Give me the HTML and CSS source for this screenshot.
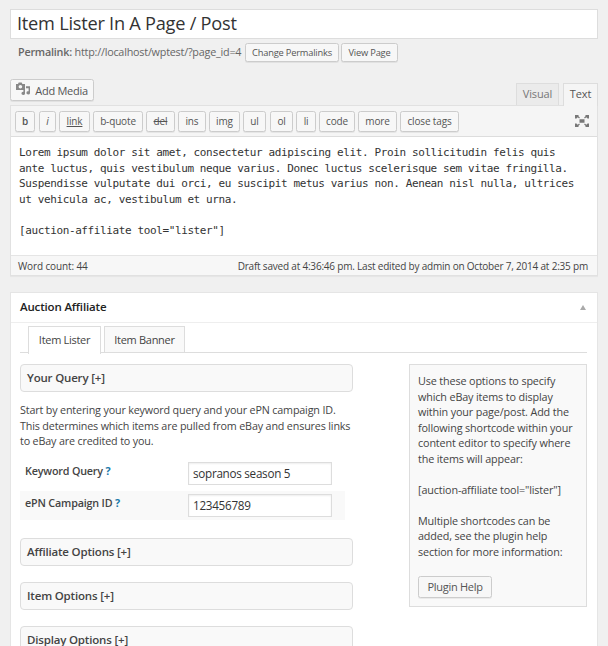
FILE: index.html
```html
<!DOCTYPE html>
<html lang="en">
<head>
<meta charset="utf-8">
<title>Edit Page</title>
<link rel="stylesheet" href="styles.css">
</head>
<body>
<main class="page">
  <div class="title"><span>Item Lister In A Page / Post</span></div>
  <div class="permalink"><span class="address"><b>Permalink:</b> http://localhost/wptest/?page_id=4</span><button class="btn small change">Change Permalinks</button><button class="btn small view">View Page</button></div>
  <div class="tools">
    <button class="btn media"><svg width="14" height="13" viewBox="0 0 14 13"><path fill="#888" fill-rule="evenodd" d="M0 2h2l.7-1.5h3L6.4 2H9v6H0zM4.4 3a1.8 1.8 0 1 0 0 3.6 1.8 1.8 0 0 0 0-3.6z"/><path fill="#888" d="M10 4.3h4v6.4a1.8 1.6 0 1 1-1.4-1.4V6.2H10zM7.4 8H9v3.2a1.8 1.6 0 1 1-1.6-1.5z"/></svg><span>Add Media</span></button>
    <div class="modes"><span class="mode visual">Visual</span><span class="mode text">Text</span></div>
  </div>
  <section class="editor">
    <div class="toolbar">
      <button class="btn q w20"><b>b</b></button><button class="btn q w17"><i>i</i></button><button class="btn q w31"><u>link</u></button><button class="btn q w50">b-quote</button><button class="btn q w29"><s>del</s></button><button class="btn q w28">ins</button><button class="btn q w31">img</button><button class="btn q w23">ul</button><button class="btn q w23 ol">ol</button><button class="btn q w20">li</button><button class="btn q w36">code</button><button class="btn q w39">more</button><button class="btn q w59">close tags</button>
      <svg class="expand" width="14" height="12" viewBox="0 0 14 12"><path fill="#777" d="M4.5 4.2h5v3.6h-5zM0 0h3.5v1.3l1.4 1.3-.8.8L2.7 2.2 1.5 3.4H0zM14 0v3.4h-1.5l-1.2-1.2-1.4 1.2-.8-.8 1.4-1.3V0zM0 12V8.6h1.5l1.2 1.2 1.4-1.2.8.8-1.4 1.3V12zM14 12h-3.5v-1.3L9.1 9.4l.8-.8 1.4 1.2 1.2-1.2H14z"/></svg>
    </div>
    <div class="content">Lorem ipsum dolor sit amet, consectetur adipiscing elit. Proin sollicitudin felis quis<br>ante luctus, quis vestibulum neque varius. Donec luctus scelerisque sem vitae fringilla.<br>Suspendisse vulputate dui orci, eu suscipit metus varius non. Aenean nisl nulla, ultrices<br>ut vehicula ac, vestibulum et urna.<br><br>[auction-affiliate tool="lister"]</div>
    <div class="status"><span class="count">Word count: 44</span><span class="saved">Draft saved at 4:36:46 pm. Last edited by admin on October 7, 2014 at 2:35 pm</span></div>
  </section>
  <section class="box">
    <header class="box-head"><h2>Auction Affiliate</h2><span class="arrow"></span></header>
    <nav class="tabs"><span class="tab active">Item Lister</span><span class="tab banner">Item Banner</span></nav>
    <div class="columns">
      <div class="options">
        <h3 class="group">Your Query [+]</h3>
        <p class="intro">Start by entering your keyword query and your ePN campaign ID.<br>This determines which items are pulled from eBay and ensures links<br>to eBay are credited to you.</p>
        <div class="field"><label>Keyword Query <a>?</a></label><input type="text" value="sopranos season 5"></div>
        <div class="field shaded"><label>ePN Campaign ID <a>?</a></label><input type="text" value="123456789"></div>
        <h3 class="group first">Affiliate Options [+]</h3>
        <h3 class="group">Item Options [+]</h3>
        <h3 class="group last">Display Options [+]</h3>
      </div>
      <aside class="help">
        <p>Use these options to specify<br>which eBay items to display<br>within your page/post. Add the<br>following shortcode within your<br>content editor to specify where<br>the items will appear:</p>
        <p>[auction-affiliate tool="lister"]</p>
        <p>Multiple shortcodes can be<br>added, see the plugin help<br>section for more information:</p>
        <button class="btn plugin">Plugin Help</button>
      </aside>
    </div>
  </section>
</main>
</body>
</html>
```

FILE: styles.css
```css
* { box-sizing: border-box; }
html, body { margin: 0; height: 646px; overflow: hidden; }
body {
  background: #f0f0f0;
  color: #444;
  font: 11px/15.5px "Open Sans", sans-serif;
}
.page { width: 588px; height: 646px; overflow: hidden; margin-left: 10px; padding-top: 9px; white-space: nowrap; }
.title {
  height: 30px;
  padding-left: 6px;
  border: 1px solid #ddd;
  background: #fff;
  color: #333;
  font-size: 18.2px;
  line-height: 26px;
  letter-spacing: -.24px;
}
.btn {
  display: flex;
  align-items: center;
  justify-content: center;
  flex: none;
  margin: 0;
  padding: 0;
  border: 1px solid #ccc;
  border-radius: 2.5px;
  background: #f7f7f7;
  box-shadow: 0 1px 0 rgba(0, 0, 0, .06);
  color: #555;
  font: 11px/15px "Open Sans", sans-serif;
  letter-spacing: -.28px;
  white-space: nowrap;
}
.permalink { display: flex; height: 19px; margin-top: 4px; padding-left: 8px; color: #666; }
.address { width: 227px; line-height: 18px; font-size: 10.8px; letter-spacing: -.22px; }
.permalink b { font-weight: 600; }
.small { height: 19px; font-size: 9.3px; letter-spacing: -.2px; }
.change { width: 94px; }
.view { width: 57px; margin-left: 2px; }
.tools { display: flex; justify-content: space-between; height: 26px; margin-top: 17px; }
.media { width: 84px; height: 22px; gap: 5px; }
.media svg { margin-top: -3px; }
.modes { display: flex; gap: 4px; padding-top: 4px; }
.mode { height: 22px; border: 1px solid #ddd; border-bottom: 0; text-align: center; line-height: 20px; letter-spacing: -.1px; }
.visual { width: 43px; background: #ebebeb; color: #777; }
.text { position: relative; width: 35px; height: 23px; background: #f5f5f5; color: #555; }
.editor { height: 171px; border: 1px solid #e1e1e1; background: #fff; box-shadow: 0 1px 1px rgba(0, 0, 0, .04); }
.toolbar {
  display: flex;
  gap: 3px;
  height: 31px;
  padding: 5px 8px 0 4px;
  border-bottom: 1px solid #ddd;
  background: #f5f5f5;
}
.q { height: 21px; font-size: 10px; letter-spacing: -.15px; }
.q b { font-weight: 600; }
.w17 { width: 17px; margin-left: 1px; }
.w20 { width: 20px; } .w23 { width: 23px; }
.w28 { width: 28px; } .w29 { width: 29px; } .w31 { width: 31px; }
.w36 { width: 36px; } .w39 { width: 39px; } .w50 { width: 50px; } .w59 { width: 59px; }
.ol { margin-left: 1px; }
.expand { margin: 4px 0 0 auto; }
.content {
  height: 118px;
  padding: 8px 8px 0 8px;
  color: #333;
  font: 11px/15.5px "DejaVu Sans Mono", monospace;
  letter-spacing: -.386px;
}
.status {
  display: flex;
  justify-content: space-between;
  height: 20px;
  padding: 0 9px 0 7px;
  border-top: 1px solid #e5e5e5;
  background: #f7f7f7;
  font-size: 10px;
  line-height: 20px;
  letter-spacing: -.2px;
}
.count { letter-spacing: -.12px; }
.box { height: 400px; margin-top: 16px; border: 1px solid #e5e5e5; background: #fff; }
.box-head { display: flex; justify-content: space-between; height: 30px; padding: 0 11px 0 9px; border-bottom: 1px solid #eee; }
h2 { margin: 0; color: #222; font-size: 11.5px; font-weight: 600; line-height: 28px; letter-spacing: -.16px; }
.arrow { width: 0; height: 0; margin-top: 12px; border: 3px solid transparent; border-top: 0; border-bottom: 5px solid #aaa; }
.tabs { display: flex; gap: 3px; height: 27px; margin: 3px 10px 0 9px; padding-left: 8px; border-bottom: 1px solid #ddd; }
.tab { width: 81px; height: 26px; border: 1px solid #ddd; border-bottom: 0; background: #f9f9f9; line-height: 26px; text-align: center; letter-spacing: -.3px; }
.tab.active { width: 73px; height: 28px; background: #fff; }
.columns { display: flex; justify-content: space-between; margin: 11px 10px 0 9px; }
.options { width: 333px; }
.group {
  height: 28px;
  margin: 0 0 16px;
  padding-left: 6px;
  border: 1px solid #ddd;
  border-radius: 4px;
  background: #f9f9f9;
  font-size: 11.5px;
  font-weight: 600;
  line-height: 26px;
  letter-spacing: -.18px;
}
.intro { height: 47px; margin: -5px 0 9px; font-size: 10.75px; letter-spacing: -.16px; }
.field { display: flex; justify-content: space-between; width: 325px; height: 29px; padding: 3px 13px 0 5px; }
.field + .field { margin-top: 3px; }
.shaded { background: #f9f9f9; }
label { font-size: 10.75px; font-weight: 600; line-height: 18px; letter-spacing: -.17px; }
label a { color: #1979aa; font-weight: 700; }
input {
  width: 144px;
  height: 23px;
  padding: 0 4px 1px;
  border: 1px solid #ddd;
  border-radius: 0;
  background: #fff;
  box-shadow: inset 0 1px 2px rgba(0, 0, 0, .07);
  color: #333;
  font: 11.7px "Open Sans", sans-serif;
  letter-spacing: -.28px;
}
.first { margin-top: 18px; }
.help { width: 178px; height: 243px; padding: 8px 8px 0; border: 1px solid #ddd; background: #f9f9f9; }
.help p { margin: 0 0 15.5px; font-size: 10.8px; letter-spacing: -.14px; }
.plugin { width: 74px; height: 22px; margin-top: 16.5px; }
```
